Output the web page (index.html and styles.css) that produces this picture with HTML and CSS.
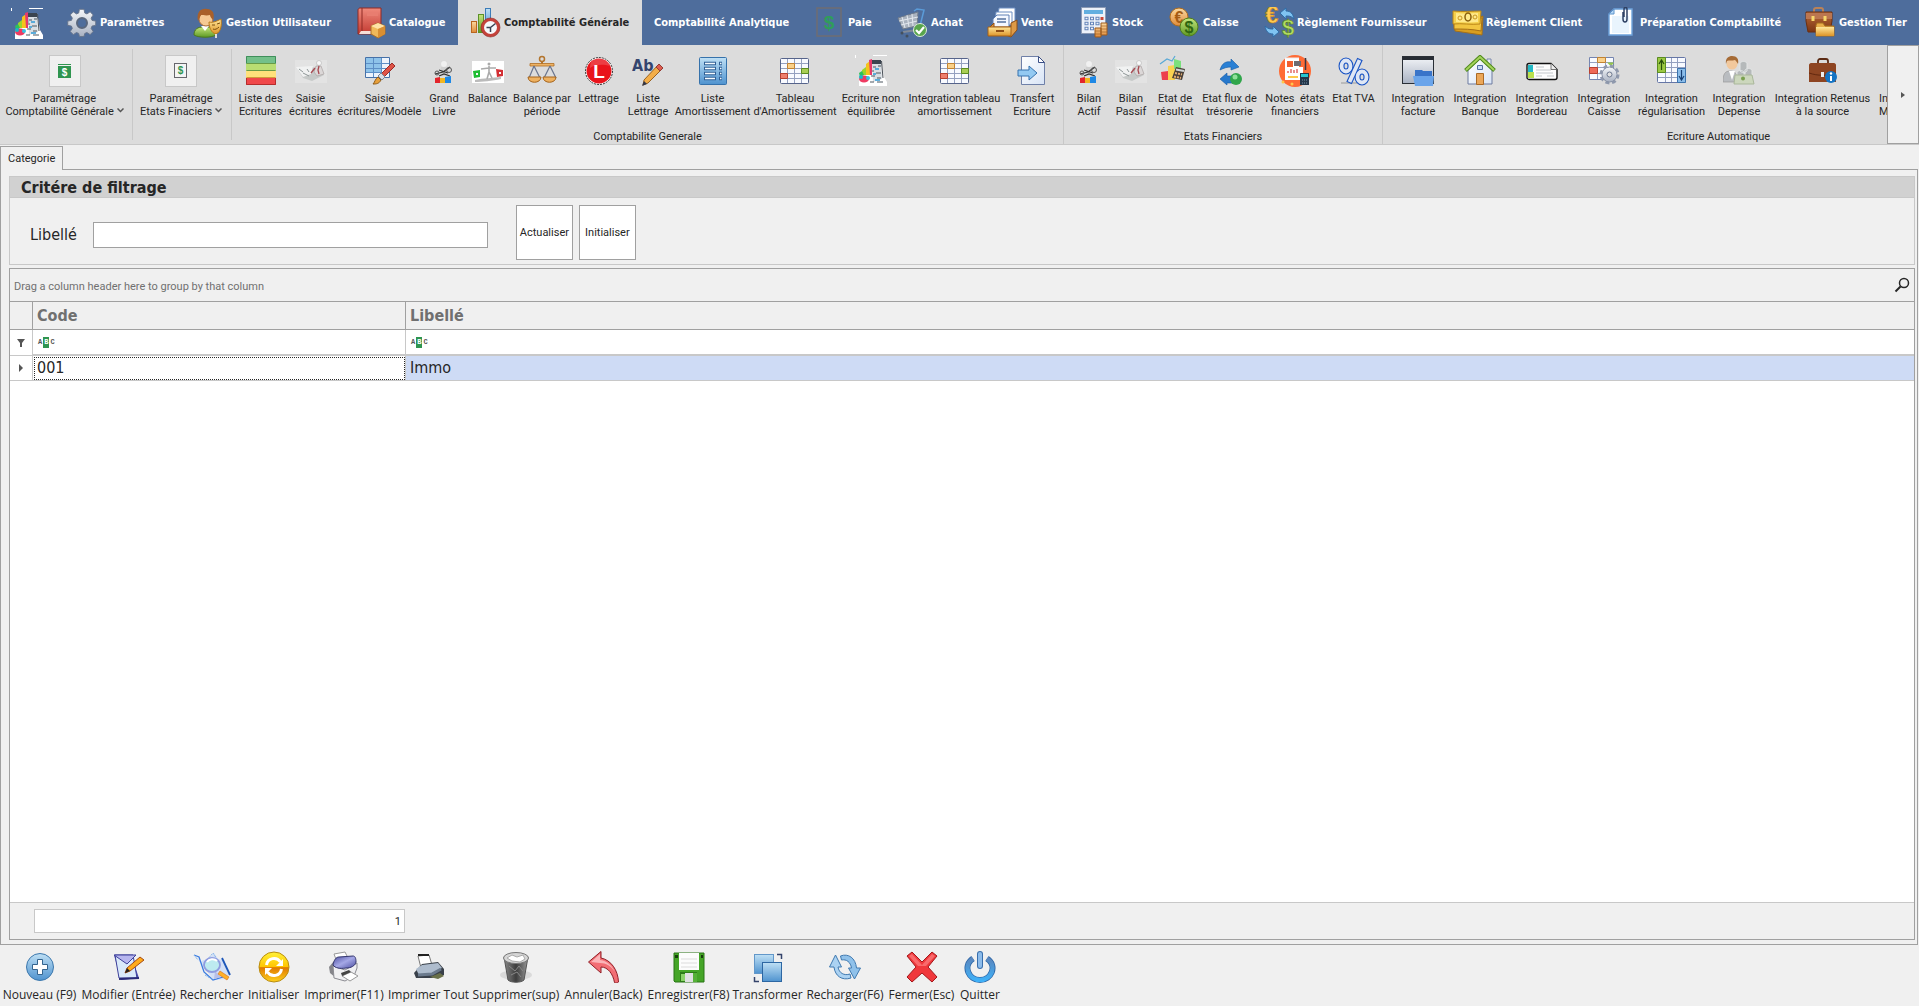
FILE: index.html
```html
<!DOCTYPE html>
<html lang="fr">
<head>
<meta charset="utf-8">
<title>Comptabilité Générale</title>
<link rel="stylesheet" href="styles.css">
</head>
<body>
<svg class="sprite" width="0" height="0" aria-hidden="true">
  <defs>
    <linearGradient id="gSteel" x1="0" y1="0" x2="0" y2="1"><stop offset="0" stop-color="#f4f6f9"/><stop offset="1" stop-color="#a9b2c2"/></linearGradient>
    <linearGradient id="gBlue" x1="0" y1="0" x2="0" y2="1"><stop offset="0" stop-color="#bfe0f5"/><stop offset="1" stop-color="#4f93cf"/></linearGradient>
    <linearGradient id="gRed" x1="0" y1="0" x2="0" y2="1"><stop offset="0" stop-color="#f08a7c"/><stop offset="1" stop-color="#c23a31"/></linearGradient>
    <linearGradient id="gGreen" x1="0" y1="0" x2="0" y2="1"><stop offset="0" stop-color="#c5e57c"/><stop offset="1" stop-color="#5d9a24"/></linearGradient>
    <linearGradient id="gGold" x1="0" y1="0" x2="0" y2="1"><stop offset="0" stop-color="#ffe79a"/><stop offset="1" stop-color="#dd9427"/></linearGradient>
    <linearGradient id="gOrange" x1="0" y1="0" x2="0" y2="1"><stop offset="0" stop-color="#fbd9a0"/><stop offset="1" stop-color="#de8a3a"/></linearGradient>
    <linearGradient id="gBrown" x1="0" y1="0" x2="0" y2="1"><stop offset="0" stop-color="#b96a38"/><stop offset="1" stop-color="#7c3513"/></linearGradient>
    <linearGradient id="gPaper" x1="0" y1="0" x2="1" y2="1"><stop offset="0" stop-color="#ffffff"/><stop offset="1" stop-color="#d8e4f6"/></linearGradient>
    <linearGradient id="gSun" x1="0" y1="0" x2="0" y2="1"><stop offset="0" stop-color="#fff23a"/><stop offset=".5" stop-color="#ffc400"/><stop offset=".52" stop-color="#e07800"/><stop offset="1" stop-color="#ffd21c"/></linearGradient>
    <linearGradient id="gPower" x1="0" y1="0" x2="0" y2="1"><stop offset="0" stop-color="#5b86bd"/><stop offset="1" stop-color="#3fb0f7"/></linearGradient>
    <linearGradient id="gDark" x1="0" y1="0" x2="1" y2="0"><stop offset="0" stop-color="#8a8a8a"/><stop offset=".5" stop-color="#3d3d3d"/><stop offset="1" stop-color="#9a9a9a"/></linearGradient>
    <linearGradient id="gViolet" x1="0" y1="0" x2="1" y2="1"><stop offset="0" stop-color="#4b4da0"/><stop offset=".5" stop-color="#a5a8e6"/><stop offset="1" stop-color="#4b4da0"/></linearGradient>

    <symbol id="i-logo" viewBox="0 0 32 32">
      <path d="M.5 0v3M18 .5h14" stroke="#fff" fill="none"/>
      <path d="M4 23l8-5 15-8 2 12 3 5v4H4z" fill="#fff"/>
      <path d="M17 6l9-1 1 19-9 3z" fill="#d9dee3"/><path d="M17 5h9v4h-9z" fill="#3b444f"/><path d="M26.500 6l1.500 17" stroke="#4a5058"/>
      <path d="M11 9l4-3v14h-4z" fill="#f6c21c"/><path d="M14 5l3-1v16h-2z" fill="#e6396a"/>
      <path d="M7 15l4-3v8H7z" fill="#9bd52a"/><path d="M4 18l3-2 2 4-4 2z" fill="#2fbf5c"/>
      <ellipse cx="9" cy="24" rx="5" ry="3.500" fill="#ee3b62"/><circle cx="6" cy="22" r="2" fill="#19b7c9"/><circle cx="13" cy="23" r="2" fill="#35c1e0"/>
      <path d="M18 12h3M23 11h3M17 16h2M21 18h5M16 21h4M22 23h4M15 27h4M22 27h6" stroke="#4d5661" stroke-width="1.200"/><path d="M20 14h4M18 19h3M20 25h5" stroke="#2f9ad8" stroke-width="1.500"/>
    </symbol>
    <symbol id="i-gear" viewBox="0 0 32 32">
      <path d="M13.500 2h5l.8 4 2.400 1 3.400-2.300 3.400 3.400L26.200 11.500l1 2.500 4 .8v4.600l-4 .8-1 2.500 2.300 3.400-3.400 3.400-3.400-2.300-2.400 1-.8 3.300h-5l-.8-3.300-2.400-1-3.400 2.300-3.400-3.400 2.300-3.400-1-2.500-4-.8v-4.600l4-.8 1-2.500L3.500 8.100l3.400-3.400L10.300 7l2.400-1z" transform="translate(1 .5) scale(.92)" fill="url(#gSteel)" stroke="#66738a"/>
      <circle cx="16" cy="16" r="5" fill="#4e6d9c" stroke="#59677e" stroke-width="2"/>
    </symbol>
    <symbol id="i-user" viewBox="0 0 32 32">
      <path d="M2 28c0-6 4-8 9-8h5c4 0 7 3 8 8-5 3-17 3-22 0z" fill="url(#gGreen)" stroke="#4b7a1d"/>
      <path d="M9 19l4 5 4-5z" fill="#fff"/><circle cx="14" cy="12" r="7" fill="#f6c994" stroke="#b4713c"/>
      <path d="M6 14C4 4 10 1 15 2c6 0 8 5 6 11-2-2-3-4-3-5-3 1-8 0-9 0-1 2-2 4-3 6z" fill="#a9602a"/>
      <path d="M17 15c4 1 8-1 12-3 1 6 0 13-5 15-5-1-7-7-7-12z" fill="url(#gGold)" stroke="#b97a1a"/>
      <path d="M20 18l3 0M25 17l3-1M21 22c2 1 4 0 6-2" stroke="#7b4f0f" fill="none"/><path d="M24 27v4" stroke="#ddd" stroke-width="2"/>
    </symbol>
    <symbol id="i-book" viewBox="0 0 32 32">
      <path d="M3 3c0-1 1-2 2-2h21v26H3z" fill="url(#gRed)" stroke="#8f2a24"/><path d="M4 27h21v-3H6z" fill="#f7ded7"/><path d="M7 1v23" stroke="#8f2a24"/><path d="M12 5h11v4H12z" fill="#e87d70"/>
      <path d="M16 19l7-3 7 3v8l-7 4-7-4z" fill="#f0b95a" stroke="#a9702a"/><path d="M16 19l7 3 7-3-7-3z" fill="#ffe2a6"/><path d="M23 22v9l7-4v-8z" fill="#d88f33"/>
    </symbol>
    <symbol id="i-chart" viewBox="0 0 32 32">
      <rect x="1.500" y="14.500" width="5" height="11" fill="url(#gOrange)" stroke="#b9661f"/><rect x="8.500" y="7.500" width="5" height="18" fill="url(#gGreen)" stroke="#5c9128"/><rect x="15.500" y="1.500" width="5" height="20" fill="url(#gBlue)" stroke="#3c7cb8"/>
      <circle cx="20.500" cy="20.500" r="8" fill="#f5f8fb" stroke="#c4423b" stroke-width="3"/><circle cx="20.500" cy="20.500" r="9.500" fill="none" stroke="#8f2823" stroke-width=".6"/><path d="M20.500 25v-4.500h-4M20.500 20.500l5-4" stroke="#3a4252" stroke-width="1.500" fill="none"/>
    </symbol>
    <symbol id="i-paie" viewBox="0 0 32 32"><rect x="3" y="1" width="24" height="28" fill="none" stroke="#6d6d75" stroke-width="1.600"/><text x="15" y="22" text-anchor="middle" font-size="19" font-weight="bold" fill="#2f9d5a">$</text></symbol>
    <symbol id="i-cart" viewBox="0 0 32 32">
      <path d="M1 11l20-6-1 14-14 3z" fill="#aab3bf" stroke="#727d8c"/><path d="M5 10l3 11M10 8l2 12M15 7l1 12M2 14l19-4M4 18l16-4" stroke="#e4e9ef"/><path d="M17 4l3-2 7 1-4 16" stroke="#5b9bd8" stroke-width="1.500" fill="none"/><path d="M6 25l14-2" stroke="#818a97" stroke-width="2"/><circle cx="5" cy="26" r="1.500" fill="#44505e"/><circle cx="10" cy="29" r="1.500" fill="#44505e"/>
      <circle cx="23" cy="23" r="6.500" fill="#58a54c" stroke="#dcecd8"/><path d="M19 23l3 3 5-6" stroke="#fff" stroke-width="2.200" fill="none"/>
    </symbol>
    <symbol id="i-vente" viewBox="0 0 32 32">
      <path d="M12 1h16v14H10z" fill="#fff" stroke="#6d8fc2"/><path d="M9 5h16v13H8z" fill="#fff" stroke="#6d8fc2"/><path d="M6 12l4-4h12v13H6z" fill="#f4f8ff" stroke="#5e80b5"/><path d="M10 12h9M10 15h9" stroke="#54719f" stroke-width="1.500"/>
      <path d="M2 21l5-5v4h17v-4l6-3v10l-6 7z" fill="#de9a46" stroke="#8f4e14"/><path d="M1 20h23v9H1z" fill="url(#gGold)" stroke="#a36018"/><path d="M9 24h8" stroke="#8f4e14" stroke-width="2"/>
    </symbol>
    <symbol id="i-calc" viewBox="0 0 32 32">
      <path d="M3.500.5h24v26h-24z" fill="#edf2fa" stroke="#8c9ab4"/><rect x="6" y="3" width="19" height="4" fill="#62afe0"/>
      <path d="M6.500 11.500h15M6.500 16.500h15M6.500 21.500h10" stroke="#6383b8" stroke-width="3.500" stroke-dasharray="4 1.500"/><path d="M7.500 11.500h13M7.500 16.500h13M7.500 21.500h8" stroke="#eef3fb" stroke-width="1.500" stroke-dasharray="2 3.500"/><path d="M22.500 10h3v3h-3z" fill="#cb4637"/>
      <path d="M17 21h6v9h-6zM23 16h6v12h-6z" fill="url(#gOrange)" stroke="#9c5a1c"/><path d="M17 24h6M17 27h6M23 19h6M23 22h6M23 25h6" stroke="#a4652a" stroke-width=".7"/>
    </symbol>
    <symbol id="i-coins" viewBox="0 0 32 32">
      <circle cx="10" cy="10" r="9" fill="url(#gOrange)" stroke="#b06c1b"/><text x="10" y="16" text-anchor="middle" font-size="16" font-weight="bold" fill="#a55c14">€</text>
      <circle cx="20" cy="20" r="9" fill="url(#gGreen)" stroke="#517f1a"/><text x="20" y="26" text-anchor="middle" font-size="16" font-weight="bold" fill="#2f6510">$</text>
    </symbol>
    <symbol id="i-exchange" viewBox="0 0 32 32">
      <text x="9" y="16" text-anchor="middle" font-size="23" font-weight="bold" fill="#ffc950" stroke="#b97d18" stroke-width=".6">€</text><text x="25" y="28" text-anchor="middle" font-size="22" font-weight="bold" fill="#b2dc62" stroke="#557f1e" stroke-width=".6">$</text>
      <path d="M17 6l6-5v3c5 0 7 3 8 8-3-3-5-3-8-3v3z" fill="#7fc3f2" stroke="#2f6da8"/><path d="M16 25l-6 5v-3c-5 0-7-3-8-8 3 3 5 3 8 3v-3z" fill="#7fc3f2" stroke="#2f6da8"/>
    </symbol>
    <symbol id="i-bills" viewBox="0 0 32 32">
      <path d="M2 17l22-5 7-3-1 19-27-4z" fill="#d89e20" stroke="#a5711a"/><path d="M2 12l28-1-1 13c-9-2-18-2-27-2z" fill="#f2c540" stroke="#a5711a"/><path d="M1 4c10 1 19 0 28 0l-1 13c-9 1-18-1-27 0z" fill="#f5cf4b" stroke="#bb8516"/><path d="M4 6c8 1 15 0 22 0v9c-8 1-15 0-22 0z" fill="#ffe98a"/><ellipse cx="16" cy="10" rx="3" ry="4" fill="none" stroke="#8a5f0c" stroke-width="1.500"/><circle cx="8" cy="11" r="2" fill="none" stroke="#c9951f"/><circle cx="23" cy="10" r="2" fill="none" stroke="#c9951f"/>
    </symbol>
    <symbol id="i-clip" viewBox="0 0 32 32"><path d="M8 2h18v26H3V7z" fill="#fff" stroke="#6ea3dc" stroke-width="1.400"/><path d="M6 9h17v17H6z" fill="#e9f4fd"/><path d="M3 7h5V2z" fill="#b6d7f6" stroke="#5d94cc"/><path d="M17 5v7c0 4 4 4 4 0V2c0-2-3-2-3 0v8" fill="none" stroke="#304264" stroke-width="1.500"/></symbol>
    <symbol id="i-case" viewBox="0 0 32 32">
      <path d="M9 6V3c0-1 1-2 2-2h5c1 0 2 1 2 2v3" fill="none" stroke="#b98259" stroke-width="2"/><path d="M1 5h26v9l-2 11H3L1 14z" fill="url(#gBrown)" stroke="#6b2f10"/><path d="M1 6h26v6H1z" fill="#bb7650"/><path d="M8 9v5M20 9v5" stroke="#f8d76b" stroke-width="3"/>
      <path d="M11 18l1-2h6l2 3h9v10H11z" fill="#e7ad4a" stroke="#a36c1c"/><path d="M11 20h18v9H11z" fill="url(#gGold)"/>
    </symbol>

    <symbol id="i-money" viewBox="0 0 32 32"><rect x=".5" y=".5" width="31" height="31" fill="#f0f0f0" stroke="#c8c8c8"/><path d="M9 9.500h13" stroke="#2f9550"/><rect x="9" y="11" width="13" height="12" fill="#2f9550"/><text x="15.500" y="21" text-anchor="middle" font-size="10" font-weight="bold" fill="#fff">$</text></symbol>
    <symbol id="i-money2" viewBox="0 0 32 32"><rect x=".5" y=".5" width="31" height="31" fill="#f0f0f0" stroke="#c8c8c8"/><rect x="9.500" y="8.500" width="12" height="14" fill="#f4f4f4" stroke="#66666c"/><text x="15.500" y="19" text-anchor="middle" font-size="10" font-weight="bold" fill="#2f9550">$</text></symbol>
    <symbol id="i-bands" viewBox="0 0 32 32"><path d="M1 1h30v8H1z" fill="#73c08a"/><path d="M1 9h30v7H1z" fill="#b9dd72"/><path d="M1 16h30v7H1z" fill="#ffe17b"/><path d="M1 23h30v7H1z" fill="#f0484a"/><path d="M1.500 8V1.500h29V8" stroke="#3f8f5b" fill="none"/><path d="M1.500 8.500h29M1.500 15.500h29" stroke="#699b46" fill="none"/><path d="M1.500 22.500h29" stroke="#d09b3d"/><path d="M1.500 23v6.500h29V23" stroke="#b52d2d" fill="none"/></symbol>
    <symbol id="i-writer" viewBox="0 0 32 32"><path d="M0 5h32v23H0z" fill="#e3e3e3"/><path d="M3 15l15-3 11 8-12 6-9-3z" fill="#c6c9c8"/><path d="M1 12l17-1-2 8-8 3z" fill="#f1f2f2"/><path d="M4 14l4 3M8 18l6 3M12 14l2 3" stroke="#8e9697"/><circle cx="24" cy="8" r="2.500" fill="#f8f8f8" stroke="#bbb" stroke-width=".7"/><path d="M21 11h5l3 8-7 2-3-4z" fill="#dcd8d8" stroke="#aaa3a3" stroke-width=".7"/><path d="M24 11l-1 4 1 4M20 13l-4 5" stroke="#a94a52" stroke-width="1.300" fill="none"/></symbol>
    <symbol id="i-model" viewBox="0 0 32 32"><path d="M1.500 2.500h24v20h-24z" fill="#edf4fc" stroke="#4671a8"/><path d="M2 3h16v14H2z" fill="#8ec3ea"/><path d="M9.500 3v19M17.500 3v19M2 8.500h23M2 13.500h23M2 17.500h23" stroke="#5d8fc6"/><path d="M28 8l3 3-12 12-3-3z" fill="#dd5347" stroke="#9b2a26"/><path d="M17 18l4 4-3 3-4-4z" fill="#d8dde4" stroke="#7a8594"/><path d="M14 22l3 3c-2 4-5 4-8 4 2-2 2-5 5-7z" fill="#e8a03a" stroke="#8d5a19"/></symbol>
    <symbol id="i-ledger" viewBox="0 0 32 32"><circle cx="16" cy="9" r="3.500" fill="#f1f1f1" stroke="#ccc" stroke-width=".5"/><path d="M13 12h7l1 9h-9z" fill="#d0d0d0"/><path d="M7 19l8-2 7-5M11 21l5-2 6 2M11 15l9 3" stroke="#333" stroke-width="1.200" fill="none"/><circle cx="9" cy="18" r="2" fill="none" stroke="#555"/><circle cx="21" cy="15" r="2.500" fill="none" stroke="#555"/><path d="M7 23l5-1v6H7z" fill="#e3242b"/><path d="M12 23h5v5h-5z" fill="#f2b620"/><path d="M17 22l6-1v7h-6z" fill="#1e88e5"/></symbol>
    <symbol id="i-balance" viewBox="0 0 32 32"><path d="M0 6h32v22H0z" fill="#fff"/><path d="M3 25c8-2 18-2 26-3v2C20 26 10 27 3 27z" fill="#bbb"/><path d="M1 16l7-1v7l-6 1z" fill="#1dbd32"/><path d="M24 14l7 1v6l-6 1z" fill="#d32f34"/><circle cx="17" cy="9" r="1.500" fill="#aaa"/><path d="M17 11v6l-2 7M17 17l3 6M9 14l8-1 7 0" stroke="#aaa" stroke-width="1.600" fill="none"/><path d="M4 18h2v2H4zM27 17h2v2h-2z" fill="#f7f7f7"/></symbol>
    <symbol id="i-scales" viewBox="0 0 32 32"><circle cx="16" cy="4" r="2.500" fill="none" stroke="#b3752e" stroke-width="1.500"/><path d="M16 7v3" stroke="#b3752e" stroke-width="2"/><path d="M4 8.500h24v2.500H4z" fill="#edb365" stroke="#b06d22" stroke-width=".8"/><path d="M8 11L3 23M8 11l6 12M24 11l-6 12M24 11l6 12" stroke="#6a758e" stroke-width="1.200"/><path d="M2 22h13c0 7-13 7-13 0zM17 22h13c0 7-13 7-13 0z" fill="#eeb160" stroke="#a5641d"/></symbol>
    <symbol id="i-letter" viewBox="0 0 32 32"><circle cx="16" cy="16" r="13.500" fill="#fff" stroke="#333" stroke-dasharray="2 1"/><circle cx="16" cy="16" r="12.500" fill="#e9141b"/><path d="M10 4c6-2 15 0 17 7-6-2-15-2-20 2 0-4 1-7 3-9z" fill="#fff" opacity=".18"/><text x="16" y="23" text-anchor="middle" font-size="19" font-weight="bold" fill="#fff">L</text></symbol>
    <symbol id="i-abc" viewBox="0 0 32 32"><text class="condensed" x="0" y="16" font-size="16" font-weight="bold" fill="#34456e">Ab</text><path d="M27 9l4 4-15 15-5 2 1-5z" fill="#f3ae49" stroke="#9a6220"/><path d="M27 9l4 4-3 3-4-4z" fill="#dc5c50" stroke="#963b33"/><path d="M12 26l3 3-5 2z" fill="#33384a"/></symbol>
    <symbol id="i-list" viewBox="0 0 32 32"><rect x="2.500" y="2.500" width="27" height="27" rx="1" fill="url(#gBlue)" stroke="#3672ab"/><path d="M7 8.500h12M22 8.500h3M7 13.500h12M22 13.500h3M7 18.500h12M22 18.500h3M7 23.500h12M22 23.500h3" stroke="#2e5f96" stroke-width="3.500"/><path d="M8 8.500h10M23 8.500h1.500M8 13.500h10M23 13.500h1.500M8 18.500h10M23 18.500h1.500M8 23.500h10M23 23.500h1.500" stroke="#f5fbff" stroke-width="1.600"/></symbol>
    <symbol id="i-table" viewBox="0 0 32 32"><rect x="1.500" y="3.500" width="28" height="25" rx="1" fill="#f8faff" stroke="#56648b"/><path d="M8.500 4v24M15.500 4v24M22.500 4v24M2 8.500h27M2 13.500h27M2 18.500h27M2 23.500h27" stroke="#94a0c0"/><path d="M8.500 8.500h7v5h-7z" fill="#fad18a" stroke="#c28332"/><path d="M22.500 13.500h7v5h-7z" fill="#a9ce55" stroke="#5d8c20"/><path d="M1.500 18.500h7v5h-7z" fill="#ee7f6e" stroke="#b9402f"/></symbol>
    <symbol id="i-transfer" viewBox="0 0 32 32"><path d="M5.500 1.500h17l6 6v22h-23z" fill="url(#gPaper)" stroke="#6f80a8"/><path d="M22.500 1.500v6h6z" fill="#fff" stroke="#3a4f86"/><path d="M2 15h11v-4l8 7-8 7v-4H2z" fill="#93c9f2" stroke="#3673ae"/></symbol>
    <symbol id="i-result" viewBox="0 0 32 32"><path d="M2 17l7-1v9H3z" fill="#ed3f4c"/><path d="M9 11l7-1v15H9z" fill="#f9d250"/><path d="M15 4l7 2v8h-7z" fill="#7be07c"/><path d="M1 9l7-5 5 2 3-5" fill="none" stroke="#5aa9d6" stroke-width="1.200"/><path d="M17 12l9 2-3 11-10-2z" fill="#4a4038"/><path d="M17 14.500l8 1.500" stroke="#cfd6d8" stroke-width="1.800"/><path d="M16 18l7 1.500M15 21.500l7 1.500" stroke="#e5af74" stroke-width="2" stroke-dasharray="2 1"/></symbol>
    <symbol id="i-flux" viewBox="0 0 32 32"><path d="M6 15C8 8 12 6 17 7V4l8 8-8 3v-3c-4 0-7 1-11 3z" fill="#2a80d4" stroke="#155aa4" stroke-width=".6"/><path d="M6 24l7-6v3l7 0v7h-7v2z" fill="#2678cc" stroke="#155aa4" stroke-width=".6"/><circle cx="22" cy="24" r="6" fill="#31a64b"/><circle cx="21" cy="22" r="2.500" fill="#8fe09a"/></symbol>
    <symbol id="i-notes" viewBox="0 0 32 32"><circle cx="16" cy="16" r="16" fill="#ff6b35"/><path d="M6 3h14v9h4v13H6z" fill="#fff"/><path d="M8 6h6v6H8z" fill="#f2602f"/><path d="M15 6h7v5h-7z" fill="#6d6a70"/><path d="M6 3h14" stroke="#eee"/><path d="M9 22h10" stroke="#ffc84a" stroke-width="2"/><path d="M9 18v-2M12 18v-4M15 18v-3M18 18v-4" stroke="#e06060" stroke-width="1.400"/><path d="M26.500 3v12" stroke="#3a3540" stroke-width="1.500"/><path d="M21 18h9v12h-9z" fill="#25364a"/><path d="M22 19h7v3h-7z" fill="#29c5cf"/><path d="M23 25h6M23 28h6" stroke="#7693a9" stroke-dasharray="1 1"/><circle cx="4" cy="27" r="1.500" fill="#ffc84a"/><circle cx="13" cy="29" r="1.500" fill="#ffc84a"/></symbol>
    <symbol id="i-percent" viewBox="0 0 32 32"><path d="M3 28h24" stroke="#bbb" stroke-width="2"/><g fill="none" stroke="#1b55c4" stroke-width="6"><ellipse cx="8" cy="11" rx="4.500" ry="5.500"/><ellipse cx="24" cy="22" rx="4.500" ry="5.500"/><path d="M22 4L11 28"/></g><g fill="none" stroke="#dfe7f5" stroke-width="3.800"><ellipse cx="8" cy="11" rx="4.500" ry="5.500"/><ellipse cx="24" cy="22" rx="4.500" ry="5.500"/><path d="M21.500 5L11.500 27"/></g></symbol>
    <symbol id="i-window" viewBox="0 0 32 32"><rect x=".5" y="1.500" width="31" height="27" fill="url(#gSteel)" stroke="#2a2f36"/><path d="M1 2h30v3H1z" fill="#272c33"/><path d="M13 18v-3h7l1 1h9v14H13z" fill="#3974c9"/><path d="M11 21h21l-1 10H13z" fill="#6aa4ea"/></symbol>
    <symbol id="i-house" viewBox="0 0 32 32"><path d="M23 4h4v9l-4-4z" fill="#e8edf7" stroke="#7a88ab"/><path d="M4 15L16 4l12 11v14H4z" fill="url(#gPaper)" stroke="#6c7b9f"/><path d="M1.500 15.500L16 2l14.500 13.500" fill="none" stroke="#4f8a1c" stroke-width="4"/><path d="M2 15L16 2l14 13" fill="none" stroke="#a4d35b" stroke-width="2"/><path d="M13.500 10.500h5v4h-5z" fill="#c9dcf5" stroke="#5470a5"/><path d="M12.500 18.500h7v11h-7z" fill="#eba759" stroke="#aa6a26"/></symbol>
    <symbol id="i-check" viewBox="0 0 32 32"><path d="M3 8.500h22l6 6v8c0 1-1 2-2 2H3c-1 0-2-1-2-2v-12c0-1 1-2 2-2z" fill="#fdfdfd" stroke="#111" stroke-width="1.400"/><path d="M2 10h5v9H2z" fill="#22b9c5"/><path d="M2 17h6v6H2z" fill="#b9e04d"/><path d="M10 12h8M10 15h15M10 18h17M10 21h6M21 21h7" stroke="#c3c7cb"/><path d="M25 8.500v6h6" fill="#eee" stroke="#555" stroke-width=".8"/></symbol>
    <symbol id="i-tablegear" viewBox="0 0 32 32"><path d="M1.500 2.500h24v22h-24z" fill="#f8faff" stroke="#7585b0"/><path d="M9.500 3v21M17.500 3v21M2 7.500h23M2 12.500h23M2 18.500h23" stroke="#94a0c0"/><path d="M9.500 2.500h8v5h-8z" fill="#fad18a" stroke="#c28332"/><path d="M1.500 12.500h8v6h-8z" fill="#ee6857" stroke="#b9402f"/><path d="M19 7.500h7l-3 4z" fill="#98c94a"/><circle cx="21.500" cy="19.500" r="8.500" fill="none" stroke="#8f99ad" stroke-width="3" stroke-dasharray="4 2.700"/><circle cx="21.500" cy="19.500" r="7.500" fill="url(#gSteel)" stroke="#8791a6"/><circle cx="21.500" cy="19.500" r="2.500" fill="#e1e1e1" stroke="#6d7890"/></symbol>
    <symbol id="i-regul" viewBox="0 0 32 32"><rect x="1.500" y="2.500" width="28" height="25" rx="1" fill="#f8faff" stroke="#6576a6"/><path d="M9.500 3v24M15.500 3v24M21.500 3v24M2 7.500h27M2 12.500h27M2 17.500h27M2 22.500h27" stroke="#94a0c0"/><path d="M1.500 2.500h8v15h-8z" fill="#9bc944" stroke="#5b8c1f"/><path d="M5.500 15V6M3 9l2.500-4L8 9" fill="none" stroke="#284e0d" stroke-width="1.200"/><path d="M21.500 13.500h8v14h-8z" fill="#8bbdea" stroke="#3b73ad"/><path d="M25.500 15v9M23 21l2.500 4 2.500-4" fill="none" stroke="#173f73" stroke-width="1.200"/></symbol>
    <symbol id="i-depense" viewBox="0 0 32 32"><path d="M0 27c0-8 2-11 7-11s8 3 8 11z" fill="#b9bcc0" stroke="#999" stroke-width=".7"/><path d="M6 16l3 9 3-9z" fill="#fff"/><circle cx="9" cy="9" r="5.500" fill="#f2c89c"/><path d="M3 9C2 3 6 1 9 1c5 0 7 3 6 8-1-2-2-3-3-4-3 1-6 0-8 1z" fill="#a66b35"/><path d="M17 8c2-2 5-2 7 0v8c-2 2-5 2-7 0zM22 15c2-2 5-2 7 0v5c-2 2-5 2-7 0zM14 17c2-2 5-2 7 0v4h-7z" fill="#b5b9ba" stroke="#e3e6e6"/><path d="M12 20h17l2 9H11z" fill="#ccd7bd" stroke="#aab79b"/><circle cx="20" cy="23.500" r="2" fill="#79a04e"/></symbol>
    <symbol id="i-retenus" viewBox="0 0 32 32"><path d="M11 9V6c0-1 1-2 2-2h6c1 0 2 1 2 2v3" fill="none" stroke="#5c2c14" stroke-width="1.800"/><path d="M4 8h23c1 0 2 1 2 2v17H2V10c0-1 1-2 2-2z" fill="#8e4522"/><path d="M2 18c9 3 18 3 27 0" stroke="#63280e" fill="none"/><path d="M14 17h3v5h-3z" fill="#eee"/><circle cx="24" cy="22" r="6" fill="#1474c4"/><path d="M24 21v5" stroke="#fff" stroke-width="2"/><circle cx="24" cy="18.500" r="1.200" fill="#fff"/></symbol>

    <symbol id="b-new" viewBox="0 0 32 32"><circle cx="16" cy="16" r="13.500" fill="url(#gBlue)" stroke="#3d78ad"/><path d="M13.500 8.500h5v5h5v5h-5v5h-5v-5h-5v-5h5z" fill="#fff" stroke="#34648f"/></symbol>
    <symbol id="b-edit" viewBox="0 0 32 32"><path d="M1 4h17l8 23-18 2z" fill="#4a4fae"/><path d="M2 4h18l4 23-18 0z" fill="#d9e9fa" stroke="#3d3f9a"/><path d="M1 4h22l-9 9z" fill="#b7b6ef" stroke="#3d3f9a"/><path d="M6 28l20-1" stroke="#292a78" stroke-width="2"/><path d="M27 6l4 3-14 11-5 2 2-5z" fill="#ffab19" stroke="#a54a12"/><path d="M14 17l3 3-5 2z" fill="#222"/></symbol>
    <symbol id="b-find" viewBox="0 0 38 32"><path d="M2 5l6 6 2-2h4l7-7 4 6 6 1 5 13-1 6-14 1z" fill="#d3e0f6"/><path d="M1 4l5 2 5 15 9 8 10-3" fill="none" stroke="#3a7be0" stroke-width="1.300"/><path d="M1 4l4 5M14 9l6-7 4 6M12 24l8 5" fill="none" stroke="#7fb3ec" stroke-dasharray="2 1"/><path d="M29 7l8 17" stroke="#1c56b8" stroke-width="1.800"/><path d="M22 20l6 6-7 2z" fill="#b7bfe8"/><ellipse cx="19" cy="14" rx="8" ry="7" fill="#bdeaf0" stroke="#8f9ce0" stroke-width="1.800"/><path d="M14 11c2-3 7-4 10-1" stroke="#fff" stroke-width="2" fill="none"/><path d="M27 20l9 6-2 3-9-6z" fill="#ffb02a" stroke="#d86b12" stroke-width=".6"/></symbol>
    <symbol id="b-init" viewBox="0 0 32 32"><circle cx="16" cy="16" r="15" fill="url(#gSun)" stroke="#b98d10"/><path d="M8.500 14c1-7 10-9 14-3M23.500 18c-1 7-10 9-14 3" stroke="#fff" stroke-width="3" fill="none"/><path d="M25 8v7h-7zM7 24v-7h7z" fill="#fff"/></symbol>
    <symbol id="b-print" viewBox="0 0 32 32"><path d="M1 16l5-6 2 17-6-5z" fill="#85858a"/><path d="M6 3l11-2 3 6-11 4z" fill="#fff" stroke="#999"/><path d="M5 15l12 4 12-7v5l-3 8-9 5-11-3z" fill="#f0f0f2" stroke="#8c8c92"/><path d="M5 14c1-5 3-8 6-8l14-1c2 0 3 2 3 6-1 4-5 6-10 6-6 1-11 0-13-3z" fill="url(#gViolet)" stroke="#34366f"/><path d="M14 25l9-4 7 4-8 5z" fill="#fff" stroke="#999"/><path d="M13 22l8-3 2 2-9 4z" fill="#444"/></symbol>
    <symbol id="b-printall" viewBox="0 0 32 32"><path d="M5 5l11-1 3 10-11 3z" fill="#fff" stroke="#777"/><path d="M5 4h11" stroke="#222" stroke-width="2"/><path d="M1 22l8-9 16-2 6 7v6l-12 3H3z" fill="#39404a"/><path d="M3 18l6-4 16-2 4 5-10 5-13 2z" fill="#aebccd"/><path d="M5 24l14-1 9-5" stroke="#6b7a8d" stroke-width="3" fill="none"/><path d="M17 26l10-4 4 3-6 3z" fill="#697049"/></symbol>
    <symbol id="b-trash" viewBox="0 0 32 32"><ellipse cx="16" cy="24" rx="16" ry="5" fill="#ccc" opacity=".6"/><path d="M4 6l4 23c3 3 13 3 16 0l4-23z" fill="url(#gDark)" stroke="#555"/><ellipse cx="16" cy="7" rx="12.500" ry="5.500" fill="#d6d6d6" stroke="#777"/><path d="M7 7l5-3 5 2 6-2 2 4-5 3-8-1z" fill="#fff" stroke="#aaa"/><path d="M9 15l6 5 4-5 4 5M11 24l6-3 4 5" stroke="#888" fill="none"/></symbol>
    <symbol id="b-undo" viewBox="0 0 32 32"><path d="M.5 11L13 .5V7c10 2 17 12 17.500 24-1 1-3 1-4 .5C25 23 20 16 13 16v6z" fill="#f26e74" stroke="#8f1e26"/><path d="M3 11l9-8v6c8 1 12 6 15 12C23 15 18 12 12 12z" fill="#fbb5b8"/></symbol>
    <symbol id="b-save" viewBox="0 0 32 32"><path d="M1 2h30v29H2l-1-1z" fill="#45a527" stroke="#287514"/><path d="M6 2h20v17H6z" fill="#fcfcfc"/><path d="M8 8h16M8 12h16M8 16h16" stroke="#dcdcdc"/><path d="M7 21h17v10H7z" fill="#2d7d18"/><path d="M12 22h8v9h-8z" fill="#e0e0e2"/><path d="M20 22h4v9h-4z" fill="#55b037"/><path d="M8 23h4v7H8z" fill="#8ad368"/><path d="M2 4h3v3H2zM28 4h2v3h-2z" fill="#173e0c"/></symbol>
    <symbol id="b-transform" viewBox="0 0 32 32"><rect x="2.500" y="3.500" width="19" height="19" fill="url(#gBlue)" stroke="#6297c9"/><rect x="10.500" y="11.500" width="19" height="19" fill="url(#gBlue)" stroke="#2d67a3"/><path d="M25 3.500h4.500V8M2.500 26v4.500H7" fill="none" stroke="#34436b" stroke-width="1.500"/></symbol>
    <symbol id="b-reload" viewBox="0 0 32 32"><path d="M.5 16l6-12 6 12H9c1 6 6 9 12 7l1 4C13 30 6 25 5 16z" fill="#abd2f2" stroke="#3f79b0"/><path d="M31.500 17l-6 11-6-11h3c-1-6-5-9-10-8l-1-4c8-3 15 2 16 12z" fill="#8fc1ea" stroke="#3f79b0"/></symbol>
    <symbol id="b-close" viewBox="0 0 32 32"><path d="M1 5l5-4 10 10L26 1l5 4-9 11 9 10-5 5-10-9-10 9-5-5 9-10z" fill="#f0383c" stroke="#a3181c"/><path d="M3 5l3-2 10 11L26 3l3 2-9 10H12z" fill="#ff8c8c" opacity=".6"/></symbol>
    <symbol id="b-quit" viewBox="0 0 32 32"><path d="M9 7.500C-2 15 5 29 16 29s18-14 7-21.500" fill="none" stroke="#2d67a8" stroke-width="6"/><path d="M9 7.500C-2 15 5 29 16 29s18-14 7-21.500" fill="none" stroke="url(#gPower)" stroke-width="4.500"/><path d="M16 3v12" stroke="#386eac" stroke-width="6" stroke-linecap="round"/><path d="M16 3v12" stroke="#8dbceb" stroke-width="4" stroke-linecap="round"/></symbol>
  </defs>
</svg>

<div class="app">
  <header class="menubar">
    <svg class="icon logo"><use href="#i-logo"/></svg>
    <nav class="tabs">
      <button class="tab"><svg class="icon"><use href="#i-gear"/></svg>Paramètres</button>
      <button class="tab"><svg class="icon"><use href="#i-user"/></svg>Gestion Utilisateur</button>
      <button class="tab"><svg class="icon"><use href="#i-book"/></svg>Catalogue</button>
      <button class="tab active"><svg class="icon"><use href="#i-chart"/></svg>Comptabilité Générale</button>
      <button class="tab">Comptabilité Analytique</button>
      <button class="tab"><svg class="icon"><use href="#i-paie"/></svg>Paie</button>
      <button class="tab"><svg class="icon"><use href="#i-cart"/></svg>Achat</button>
      <button class="tab"><svg class="icon"><use href="#i-vente"/></svg>Vente</button>
      <button class="tab"><svg class="icon"><use href="#i-calc"/></svg>Stock</button>
      <button class="tab"><svg class="icon"><use href="#i-coins"/></svg>Caisse</button>
      <button class="tab"><svg class="icon"><use href="#i-exchange"/></svg>Règlement Fournisseur</button>
      <button class="tab"><svg class="icon"><use href="#i-bills"/></svg>Règlement Client</button>
      <button class="tab"><svg class="icon"><use href="#i-clip"/></svg>Préparation Comptabilité</button>
      <button class="tab"><svg class="icon"><use href="#i-case"/></svg>Gestion Tier</button>
    </nav>
  </header>

  <div class="ribbon">
    <div class="groups">
      <section class="group short g-param">
        <div class="items">
          <button class="item"><svg class="icon"><use href="#i-money"/></svg><span>Paramétrage<br>Comptabilité Générale <svg class="chevron" viewBox="0 0 7 5"><path d="M.5.5l3 3 3-3"/></svg></span></button>
        </div>
      </section>
      <section class="group short g-etats">
        <div class="items">
          <button class="item"><svg class="icon"><use href="#i-money2"/></svg><span>Paramétrage<br>Etats Finaciers <svg class="chevron" viewBox="0 0 7 5"><path d="M.5.5l3 3 3-3"/></svg></span></button>
        </div>
      </section>
      <section class="group g-compta">
        <div class="items">
          <button class="item"><svg class="icon"><use href="#i-bands"/></svg><span>Liste des<br>Ecritures</span></button>
          <button class="item"><svg class="icon"><use href="#i-writer"/></svg><span>Saisie<br>écritures</span></button>
          <button class="item"><svg class="icon"><use href="#i-model"/></svg><span>Saisie<br>écritures/Modèle</span></button>
          <button class="item"><svg class="icon"><use href="#i-ledger"/></svg><span>Grand<br>Livre</span></button>
          <button class="item"><svg class="icon"><use href="#i-balance"/></svg><span>Balance</span></button>
          <button class="item"><svg class="icon"><use href="#i-scales"/></svg><span>Balance par<br>période</span></button>
          <button class="item"><svg class="icon"><use href="#i-letter"/></svg><span>Lettrage</span></button>
          <button class="item"><svg class="icon"><use href="#i-abc"/></svg><span>Liste<br>Lettrage</span></button>
          <button class="item"><svg class="icon"><use href="#i-list"/></svg><span>Liste<br>Amortissement</span></button>
          <button class="item"><svg class="icon"><use href="#i-table"/></svg><span>Tableau<br>d'Amortissement</span></button>
          <button class="item"><svg class="icon"><use href="#i-logo"/></svg><span>Ecriture non<br>équilibrée</span></button>
          <button class="item"><svg class="icon"><use href="#i-table"/></svg><span>Integration tableau<br>amortissement</span></button>
          <button class="item"><svg class="icon"><use href="#i-transfer"/></svg><span>Transfert<br>Ecriture</span></button>
        </div>
        <div class="caption">Comptabilite Generale</div>
      </section>
      <section class="group g-fin">
        <div class="items">
          <button class="item"><svg class="icon"><use href="#i-ledger"/></svg><span>Bilan<br>Actif</span></button>
          <button class="item"><svg class="icon"><use href="#i-writer"/></svg><span>Bilan<br>Passif</span></button>
          <button class="item"><svg class="icon"><use href="#i-result"/></svg><span>Etat de<br>résultat</span></button>
          <button class="item"><svg class="icon"><use href="#i-flux"/></svg><span>Etat flux de<br>trésorerie</span></button>
          <button class="item"><svg class="icon"><use href="#i-notes"/></svg><span>Notes&nbsp; états<br>financiers</span></button>
          <button class="item"><svg class="icon"><use href="#i-percent"/></svg><span>Etat TVA</span></button>
        </div>
        <div class="caption">Etats Financiers</div>
      </section>
      <section class="group g-auto">
        <div class="items">
          <button class="item"><svg class="icon"><use href="#i-window"/></svg><span>Integration<br>facture</span></button>
          <button class="item"><svg class="icon"><use href="#i-house"/></svg><span>Integration<br>Banque</span></button>
          <button class="item"><svg class="icon"><use href="#i-check"/></svg><span>Integration<br>Bordereau</span></button>
          <button class="item"><svg class="icon"><use href="#i-tablegear"/></svg><span>Integration<br>Caisse</span></button>
          <button class="item"><svg class="icon"><use href="#i-regul"/></svg><span>Integration<br>régularisation</span></button>
          <button class="item"><svg class="icon"><use href="#i-depense"/></svg><span>Integration<br>Depense</span></button>
          <button class="item"><svg class="icon"><use href="#i-retenus"/></svg><span>Integration Retenus<br>à la source</span></button>
          <button class="item cut"><span class="icon"></span><span>In<br>M</span></button>
        </div>
        <div class="caption">Ecriture Automatique</div>
      </section>
    </div>
    <button class="scroll" aria-label="Suivant"><svg viewBox="0 0 4 6"><path d="M0 0v6l4-3z"/></svg></button>
  </div>

  <div class="doctabs"><button class="doctab">Categorie</button></div>

  <main class="panel">
    <section class="filter">
      <h2>Critére de filtrage</h2>
      <div class="filter-body">
        <div class="field">
          <label for="libelle">Libellé</label>
          <input id="libelle" type="text">
        </div>
        <div class="actions">
          <button>Actualiser</button>
          <button>Initialiser</button>
        </div>
      </div>
    </section>

    <section class="grid">
      <div class="groupbar">
        <span>Drag a column header here to group by that column</span>
        <button aria-label="Rechercher"><svg viewBox="0 0 16 16"><circle cx="10" cy="6" r="4.500"/><path d="M6.500 9.500L1.500 14.500" stroke-width="2"/></svg></button>
      </div>
      <div class="table-area">
        <table>
          <colgroup><col class="c-mark"><col class="c-code"><col></colgroup>
          <thead><tr><th></th><th>Code</th><th>Libellé</th></tr></thead>
          <tbody>
            <tr class="criteria">
              <td><svg class="funnel" viewBox="0 0 10 10"><path d="M1 1h8L6 5v4H4V5z"/></svg></td>
              <td><span class="abc">A<b>B</b>C</span></td>
              <td><span class="abc">A<b>B</b>C</span></td>
            </tr>
            <tr class="selected">
              <td><svg class="marker" viewBox="0 0 4 8"><path d="M0 0v8l4-4z"/></svg></td>
              <td class="focused">001</td>
              <td>Immo</td>
            </tr>
          </tbody>
        </table>
      </div>
      <div class="summary"><output>1</output></div>
    </section>
  </main>

  <footer class="toolbar">
    <button class="tool"><svg class="icon"><use href="#b-new"/></svg>Nouveau (F9)</button>
    <button class="tool"><svg class="icon"><use href="#b-edit"/></svg>Modifier (Entrée)</button>
    <button class="tool"><svg class="icon wide"><use href="#b-find"/></svg>Rechercher</button>
    <button class="tool"><svg class="icon"><use href="#b-init"/></svg>Initialiser</button>
    <button class="tool"><svg class="icon"><use href="#b-print"/></svg>Imprimer(F11)</button>
    <button class="tool"><svg class="icon"><use href="#b-printall"/></svg>Imprimer Tout</button>
    <button class="tool"><svg class="icon"><use href="#b-trash"/></svg>Supprimer(sup)</button>
    <button class="tool"><svg class="icon"><use href="#b-undo"/></svg>Annuler(Back)</button>
    <button class="tool"><svg class="icon"><use href="#b-save"/></svg>Enregistrer(F8)</button>
    <button class="tool"><svg class="icon"><use href="#b-transform"/></svg>Transformer</button>
    <button class="tool"><svg class="icon"><use href="#b-reload"/></svg>Recharger(F6)</button>
    <button class="tool"><svg class="icon"><use href="#b-close"/></svg>Fermer(Esc)</button>
    <button class="tool"><svg class="icon"><use href="#b-quit"/></svg>Quitter</button>
  </footer>
</div>
</body>
</html>
```

FILE: styles.css
```css
* { box-sizing: border-box; }

body {
  margin: 0;
  background: #f0f0f0;
  color: #262626;
  font: 11px/13px Roboto, "Liberation Sans", sans-serif;
}

button {
  margin: 0;
  padding: 0;
  border: 0;
  background: none;
  color: inherit;
  font: inherit;
}

.sprite { position: absolute; }
.sprite text { font-family: "Liberation Sans", sans-serif; }
.sprite .condensed { font-family: "DejaVu Sans Condensed", "DejaVu Sans", sans-serif; }

.icon { display: block; flex: none; width: 32px; height: 32px; }
.icon.wide { width: 38px; }

.app { display: flex; flex-direction: column; min-height: 100vh; }

/* Top menu */
.menubar {
  display: flex;
  height: 45px;
  overflow: hidden;
  background: #4e6d9c;
  color: #fff;
}
.logo { margin: 8px 11px 0; }
.tabs {
  display: grid;
  grid-template-columns: 126px 163px 115px 184px 160px 83px 90px 91px 91px 94px 189px 154px 199px 125px;
}
.tab {
  display: flex;
  align-items: center;
  gap: 2px;
  padding: 0 0 0 12px;
  font: bold 11px/13px "DejaVu Sans Condensed", "DejaVu Sans", sans-serif;
  white-space: nowrap;
}
.tab.active { background: #dcdcdc; color: #262626; }

/* Ribbon */
.ribbon {
  display: flex;
  height: 100px;
  border-bottom: 1px solid #c8c8c8;
  background: #dcdcdc;
}
.groups { display: flex; flex: 1; min-width: 0; overflow: hidden; }
.group {
  display: flex;
  flex: none;
  flex-direction: column;
  justify-content: space-between;
  padding: 10px 4px 1px;
  border-right: 1px solid #c8c8c8;
}
.group.short { margin: 4px 0; padding-top: 6px; }
.items { display: grid; }
.g-param { width: 133px; }
.g-param .items { grid-template-columns: 121px; }
.g-etats { width: 99px; }
.g-etats .items { grid-template-columns: 88px; }
.g-compta .items { grid-template-columns: 49px 51px 87px 42px 45px 64px 49px 50px 79px 86px 66px 101px 54px; }
.g-fin .items { grid-template-columns: 42px 42px 46px 63px 68px 49px; }
.g-auto .items { grid-template-columns: repeat(4, 62px) 73px 62px 105px 175px; }
.item {
  display: flex;
  flex-direction: column;
  align-items: center;
  gap: 5px;
  text-align: center;
  white-space: nowrap;
}
.item.cut { align-items: flex-start; padding-left: 4px; text-align: left; }
.caption { text-align: center; }
.chevron {
  width: 7px;
  height: 5px;
  margin-bottom: 2px;
  fill: none;
  stroke: #555;
  stroke-width: 1.5;
}
.scroll {
  display: flex;
  align-items: center;
  justify-content: center;
  width: 32px;
  border: 1px solid #a0a0a0;
  background: #f0f0f0;
}
.scroll svg { width: 4px; height: 6px; fill: #555; }

/* Document tab and its panel */
.doctabs { position: relative; z-index: 1; height: 24px; padding-top: 1px; }
.doctab {
  height: 24px;
  padding: 0 7px;
  border: 1px solid #a0a0a0;
  border-bottom: 0;
  background: #f0f0f0;
}
.panel {
  display: flex;
  flex: 1;
  flex-direction: column;
  gap: 3px;
  margin-right: 1px;
  padding: 6px 2px 4px 8px;
  border: 1px solid #a0a0a0;
}

.filter { border: 1px solid #c8c8c8; }
.filter h2 {
  margin: 0;
  padding: 1px 11px 0;
  border-bottom: 1px solid #c8c8c8;
  background: #d1d1d1;
  font: bold 16px/19px "DejaVu Sans Condensed", "DejaVu Sans", sans-serif;
}
.filter-body { display: flex; gap: 28px; padding: 7px 20px 4px; }
.field { display: flex; align-items: center; gap: 16px; padding-top: 4px; }
.field label { font: 16px/20px "DejaVu Sans Condensed", "DejaVu Sans", sans-serif; white-space: nowrap; }
.field input {
  width: 395px;
  height: 26px;
  padding: 0 4px;
  border: 1px solid #a0a0a0;
  background: #fff;
  font-size: 16px;
}
.actions { display: flex; gap: 6px; }
.actions button { width: 57px; height: 55px; border: 1px solid #a0a0a0; background: #fff; }

/* Data grid */
.grid { display: flex; flex: 1; flex-direction: column; border: 1px solid #a0a0a0; }
.groupbar {
  display: flex;
  align-items: center;
  justify-content: space-between;
  height: 33px;
  padding: 2px 4px 0;
  border-bottom: 1px solid #a0a0a0;
  color: #707070;
}
.groupbar svg { display: block; width: 16px; height: 16px; margin-bottom: 3px; fill: none; stroke: #262626; stroke-width: 1.5; }
.table-area { flex: 1; background: #fff; }
table { width: 100%; border-collapse: separate; border-spacing: 0; table-layout: fixed; font: 16px/20px "DejaVu Sans Condensed", "DejaVu Sans", sans-serif; }
.c-mark { width: 23px; }
.c-code { width: 373px; }
th, td { padding: 0 4px; text-align: left; vertical-align: middle; }
th {
  height: 28px;
  border-right: 1px solid #a0a0a0;
  border-bottom: 1px solid #a0a0a0;
  background: #f0f0f0;
  color: #707070;
}
td { height: 25px; border-right: 1px solid #c8c8c8; border-bottom: 1px solid #c8c8c8; }
th:last-child, td:last-child { border-right: 0; }
td svg { display: block; margin: 0 auto; fill: #555; }
.criteria td { height: 26px; border-bottom-width: 2px; }
.criteria td:first-child { border-bottom-width: 1px; }
.funnel { width: 10px; height: 10px; }
.marker { width: 4px; height: 8px; }
.selected td:last-child { background: #cedbf5; }
.selected .focused { outline: 1px dotted #262626; outline-offset: -2px; }
.abc { display: flex; align-items: center; padding-left: 1px; color: #555; font: bold 7px/11px "Liberation Mono", monospace; }
.abc b { margin: 0 1px; padding: 0 1px; background: #2f9550; color: #fff; }
.summary { padding: 6px 24px; border-top: 1px solid #c8c8c8; }
.summary output {
  display: block;
  width: 371px;
  height: 24px;
  padding: 5px 3px;
  border: 1px solid #c8c8c8;
  background: #fff;
  text-align: right;
}

/* Bottom commands */
.toolbar {
  display: grid;
  grid-template-columns: 79px 99px 67px 57px 84px 85px 90px 85px 85px 73px 82px 71px 46px;
  height: 61px;
  padding-top: 6px;
  font: 12px/16px "Open Sans", "Noto Sans", sans-serif;
}
.tool { display: flex; flex-direction: column; align-items: center; gap: 4px; white-space: nowrap; }
```
